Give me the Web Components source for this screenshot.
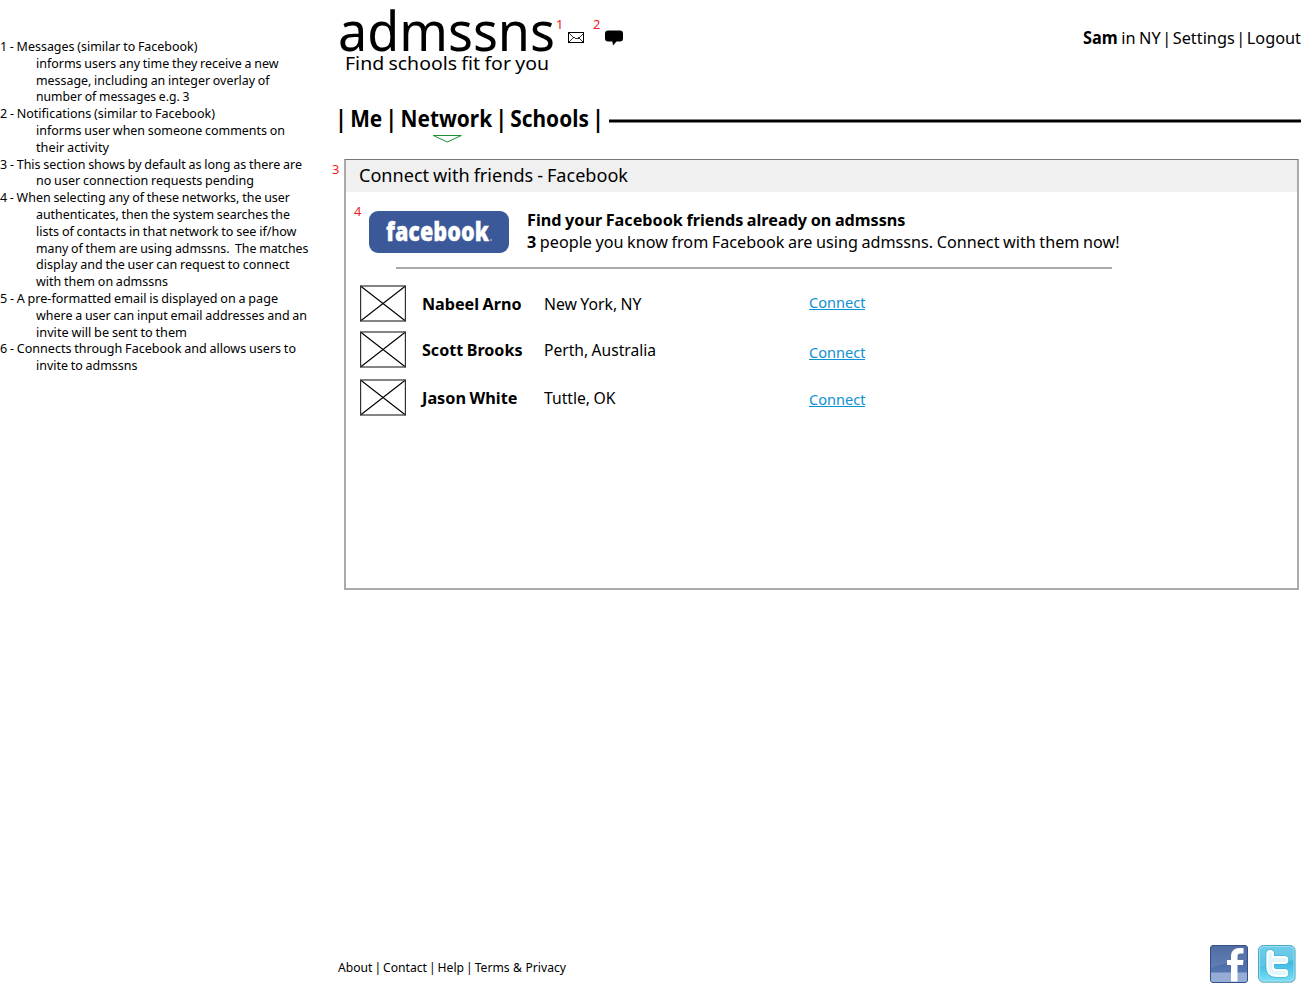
<!DOCTYPE html>
<html lang="en">
<head>
<meta charset="utf-8">
<title>admssns - Network</title>
<style>
html,body{margin:0;padding:0;background:#fff;color:#000;font-family:"Noto Sans","Open Sans",sans-serif;overflow:hidden}
</style>
</head>
<body>
<adm-page></adm-page>
<script>
const define=(name,html,after)=>{
  const t=document.createElement('template');
  t.innerHTML=html;
  customElements.define(name,class extends HTMLElement{
    constructor(){super();this.attachShadow({mode:'open'}).append(t.content.cloneNode(true));}
    connectedCallback(){if(after)after(this);}
  });
};

/* One line of text condensed or expanded to a given measure. */
define('fit-text',`<style>
:host{display:block;flex:none;white-space:pre;word-spacing:var(--gap,-.04em)}
span{display:inline-block;transform-origin:0 50%;vertical-align:top}
::slotted(a){color:inherit;text-decoration:none}
::slotted(i){font-style:normal;margin:0 -.13em}
</style><span><slot></slot></span>`,el=>{
  const w=+el.getAttribute('w'),s=+el.getAttribute('size'),l=+el.getAttribute('line');
  el.style.width=w+'px';
  if(s)el.style.fontSize=s+'px';
  if(l){el.style.lineHeight=l+'px';el.style.height=l+'px';}
  const span=el.shadowRoot.querySelector('span');
  span.style.transform='none';
  const n=span.getBoundingClientRect().width;
  if(n)span.style.transform='scaleX('+w/n+')';
});

define('note-mark',`<style>
:host{position:absolute;color:#ed1c24;font-size:12.8px;line-height:16px}
</style><slot></slot>`);

define('adm-notes',`<style>
:host{display:block;padding-top:38px}
.in{margin-left:36px}
</style><div></div>`,el=>{
  const lines=[
  [0,197.5,'1 - Messages (similar to Facebook)'],
  [1,242.5,'informs users any time they receive a new'],
  [1,233.5,'message, including an integer overlay of'],
  [1,153.5,'number of messages e.g. 3'],
  [0,215,'2 - Notifications (similar to Facebook)'],
  [1,249,'informs user when someone comments on'],
  [1,73,'their activity'],
  [0,302,'3 - This section shows by default as long as there are'],
  [1,218,'no user connection requests pending'],
  [0,290,'4 - When selecting any of these networks, the user'],
  [1,254,'authenticates, then the system searches the'],
  [1,260.5,'lists of contacts in that network to see if/how'],
  [1,272.5,'many of them are using admssns.  The matches'],
  [1,253.5,'display and the user can request to connect'],
  [1,132,'with them on admssns'],
  [0,278,'5 - A pre-formatted email is displayed on a page'],
  [1,271,'where a user can input email addresses and an'],
  [1,151,'invite will be sent to them'],
  [0,296,'6 - Connects through Facebook and allows users to'],
  [1,101.5,'invite to admssns']];
  el.shadowRoot.querySelector('div').innerHTML=lines.map(([i,w,t])=>
    `<fit-text w="${w}" size="12.9" line="16.8"${i?' class="in"':''}>${t}</fit-text>`).join('');
});

define('adm-header',`<style>
:host{display:flex;height:100px;position:relative;align-items:flex-start}
.brand{width:230px;padding-top:5px;box-sizing:border-box;flex:none}
.tag{margin:-2px 0 0 6.500px}
.icons{display:flex;gap:21px;padding-top:30px;align-items:flex-start}
.icons svg{display:block}
.env{margin-top:1.5px}
.acct{margin:28px .500px 0 auto}
</style>
<div class="brand">
<fit-text class="logo" w="217" size="55" line="50">admssns</fit-text>
<fit-text class="tag" w="204" size="18" line="20">Find schools fit for you</fit-text>
</div>
<div class="icons">
<svg class="env" width="16" height="12" viewBox="0 0 16 12" fill="none" stroke="#000" shape-rendering="crispEdges"><rect x=".5" y=".5" width="15" height="10"/><path stroke-width=".8" d="M1 1l5.500 5h3L15 1M1 10l5-4.500M15 10l-5-4.500"/></svg>
<svg width="18" height="16" viewBox="0 0 18 16"><path d="M3 .5h12q3 0 3 3v5q0 3-3 3h-3.500L8 15.500 7.300 11.500H3q-3 0-3-3v-5q0-3 3-3z"/></svg>
</div>
<fit-text class="acct" w="218" size="17" line="20"><b>Sam</b> in NY <i>|</i> <a>Settings</a> <i>|</i> <a>Logout</a></fit-text>
<note-mark style="left:218px;top:16px">1</note-mark>
<note-mark style="left:255px;top:16px">2</note-mark>`);

define('adm-nav',`<style>
:host{display:flex;height:59px;padding-top:6px;box-sizing:border-box;position:relative;font-weight:700;--gap:.03em}
.rule{flex:1;margin:13px 0 0 8px;height:2px;border:solid #808080;border-width:1px 0;background:#000}
svg{position:absolute;left:94px;top:34px}
</style>
<fit-text w="263" size="22.300" line="25"><i>|</i> <a>Me</a> <i>|</i> <a>Network</a> <i>|</i> <a>Schools</a> <i>|</i></fit-text>
<div class="rule"></div>
<svg width="31" height="10" viewBox="0 0 31 10" fill="none" stroke="#1c9038"><path d="M1.300 1.500h28L15.300 8z"/></svg>`);

define('friend-row',`<style>
:host{display:flex;height:37px;align-items:flex-start}
svg{display:block;margin-right:15.500px;flex:none}
.name{width:122px;flex:none}
.city{width:265px;flex:none}
::slotted(*){display:block}
.name,.city{padding-top:8px}
</style>
<svg width="46" height="37" viewBox="0 0 46 37" fill="none" stroke="#000"><path d="M.5 1l45 35M45.500 1L.5 36" stroke-width="1.100"/><rect x=".6" y="1" width="44.800" height="35" stroke="#333" stroke-width="1.200"/></svg>
<div class="name"><slot name="name"></slot></div>
<div class="city"><slot name="city"></slot></div>
<slot name="action"></slot>`);

define('facebook-badge',`<style>
:host{display:flex;width:140px;height:42px;box-sizing:border-box;border-radius:9px;background:#3b5998;color:#fff;font-weight:800;font-family:"Open Sans",sans-serif;padding:1px 0 0 16.500px;position:relative;-webkit-text-stroke:.3px #fff}
i{position:absolute;left:121px;top:28px;width:2px;height:2px;border-radius:50%;background:#a9b8d8}
</style><fit-text w="103" size="27" line="37">facebook</fit-text><i></i>`);

define('connect-panel',`<style>
:host{display:block;box-sizing:border-box;margin-left:6px;width:955px;height:431px;border:2px solid #aaa;border-top:1px solid #777;position:relative}
.head{background:#f0f0f0;height:32px;padding:3px 0 0 12.500px;box-sizing:border-box}
.intro{display:flex;padding:19px 0 0 23px;height:75px;box-sizing:border-box}
.copy{margin:-2px 0 0 17.500px}
.rule{height:2px;background:#aaa;width:716px;margin-left:50px}
.rows{padding:16px 0 0 14px}
.c{color:#0f90d2;text-decoration:none}
.c fit-text{background:linear-gradient(#0f90d2,#0f90d2) 0 15px/100% 1px no-repeat}
</style>
<div class="head"><fit-text w="269" size="18.300" line="24">Connect with friends - Facebook</fit-text></div>
<div class="intro"><facebook-badge></facebook-badge><div class="copy">
<fit-text w="378.500" size="16.600" line="21.500"><b>Find your Facebook friends already on admssns</b></fit-text>
<fit-text w="592.500" size="16.600" line="21.500"><b>3</b> people you know from Facebook are using admssns. Connect with them now!</fit-text></div></div>
<div class="rule"></div>
<div class="rows"></div>
<note-mark style="left:-14px;top:1px">3</note-mark>
<note-mark style="left:8px;top:43px">4</note-mark>`,el=>{
  const people=[['Nabeel Arno',99.5,'New York, NY',97.5,9,9],['Scott Brooks',100.5,'Perth, Australia',112,11,13],['Jason White',95.5,'Tuttle, OK',71.5,0,12]];
  el.shadowRoot.querySelector('.rows').innerHTML=people.map(([n,w,c,cw,gap,top])=>
  `<friend-row style="margin-bottom:${gap}px"><fit-text slot="name" w="${w}" size="16.6" line="22"><b>${n}</b></fit-text><fit-text slot="city" w="${cw}" size="16.6" line="22">${c}</fit-text><a slot="action" class="c" style="padding-top:${top}px"><fit-text w="56.500" size="15.200" line="17">Connect</fit-text></a></friend-row>`).join('');
});

define('adm-footer',`<style>
:host{display:flex;justify-content:space-between;margin-top:auto;height:41px;padding-right:4px;--gap:.03em}
fit-text{margin-top:15px}
.s{display:flex;gap:8px}
svg{display:block}
</style>
<fit-text w="228" size="13" line="17"><a>About</a> <i>|</i> <a>Contact</a> <i>|</i> <a>Help</a> <i>|</i> <a>Terms &amp; Privacy</a></fit-text>
<div class="s">
<svg width="40" height="40" viewBox="0 0 40 40"><defs><linearGradient id="f" x2="0" y2="1"><stop stop-color="#3c5b97"/><stop offset=".5" stop-color="#4e6ea9"/><stop offset="1" stop-color="#5f80ba"/></linearGradient></defs>
<rect x="1.500" y="1.500" width="37" height="37" rx="2.500" fill="url(#f)" stroke="#35508a"/><path d="M2 2h36v14Q20 17 2 24z" fill="#fff" opacity=".1"/><path d="M2 28.500h36V36q0 2-2 2H4q-2 0-2-2z" fill="#a9bee0" opacity=".75"/>
<path d="M22 37.500V21h-4v-5h4V12.500q0-8.500 8.500-8.500H34.500V9.500h-3q-3 0-3 3V16h6L34 21h-5.500v16.500z" fill="#fff"/></svg>
<svg width="40" height="40" viewBox="0 0 40 40"><defs><linearGradient id="t" x2="0" y2="1"><stop stop-color="#58c5e5"/><stop offset=".5" stop-color="#43bce2"/><stop offset="1" stop-color="#7be0f5"/></linearGradient></defs>
<rect x="1.500" y="2" width="37" height="37" rx="5" fill="#bbb" opacity=".6"/><rect x="1.500" y="1.500" width="36.500" height="36.500" rx="5" fill="url(#t)" stroke="#4aabc9"/><rect x="2.500" y="2.500" width="34.500" height="34.500" rx="4" fill="none" stroke="#b4ebf8" opacity=".7"/><path d="M3 3h33.500v13Q20 17 3 23z" fill="#fff" opacity=".15"/>
<g fill="none" stroke-linecap="round" stroke-linejoin="round"><path d="M13.200 10v13q0 6 6 6h8.300M13.500 16h14" stroke="#31a9d1" stroke-width="9"/><path d="M13.200 10v13q0 6 6 6h8.300M13.500 16h14" stroke="#fff" stroke-width="7.800"/><path d="M13.200 10v13q0 6 6 6h8.300M13.500 16h14" stroke="#e2f7fc" stroke-width="4"/></g></svg>
</div>`);

define('adm-page',`<style>
:host{display:grid;grid-template-columns:338px 963px;width:1301px;height:985px}
main{display:flex;flex-direction:column;height:985px}
</style>
<adm-notes></adm-notes>
<main><adm-header></adm-header><adm-nav></adm-nav><connect-panel></connect-panel><adm-footer></adm-footer></main>`);
</script>
</body>
</html>
